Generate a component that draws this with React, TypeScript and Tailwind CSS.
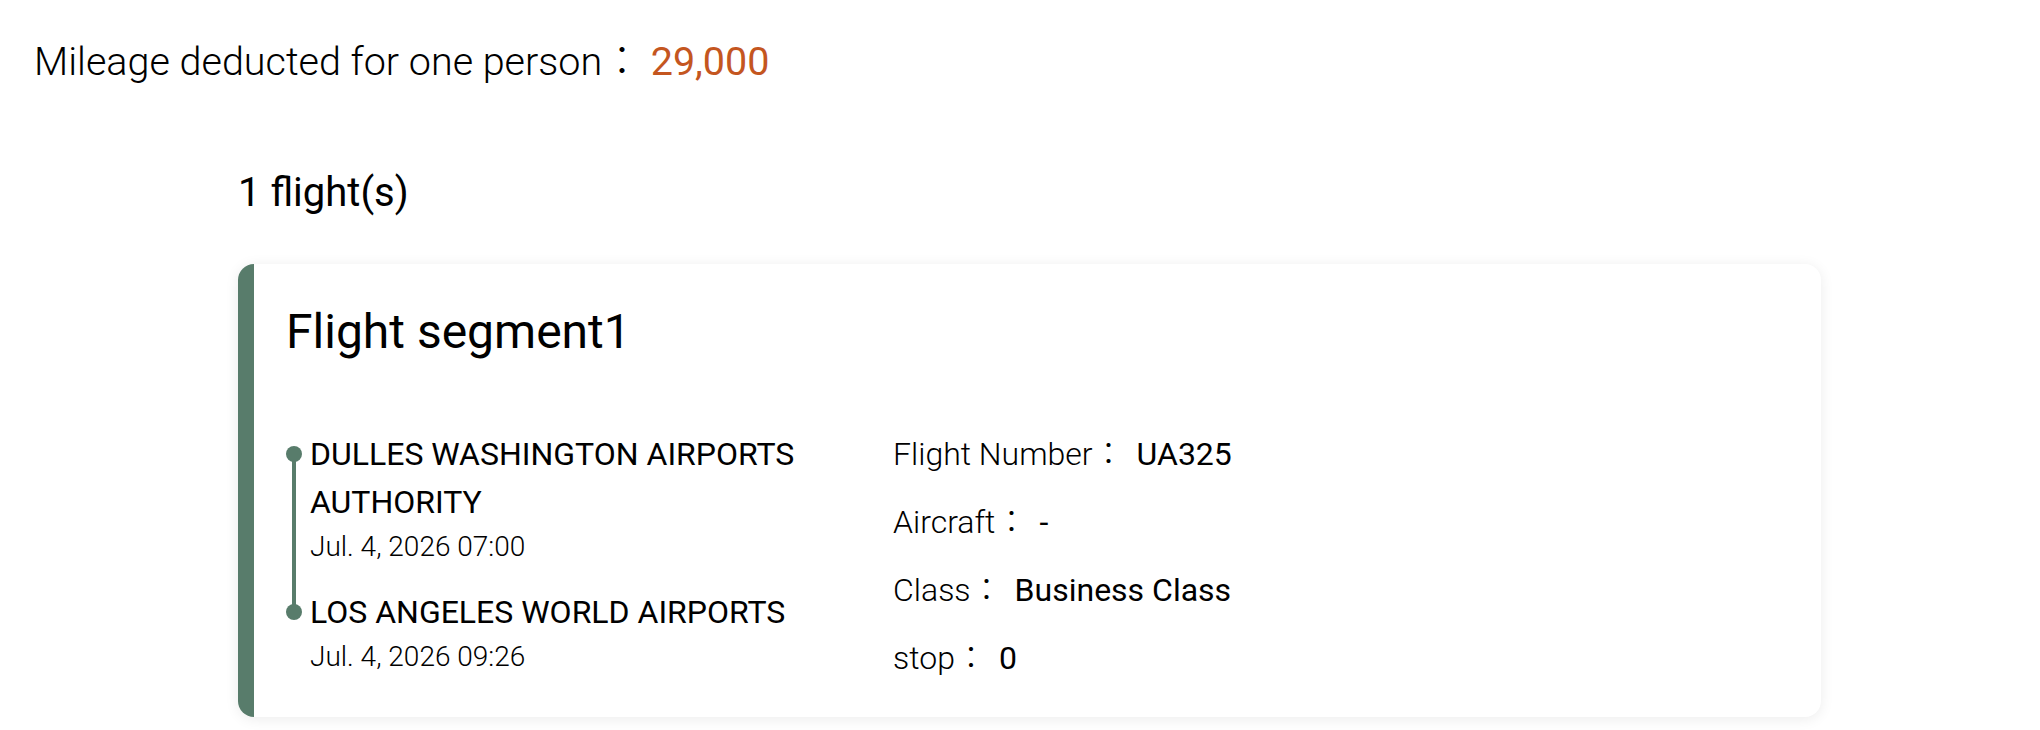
const font = { fontFamily: 'Roboto, "Noto Sans CJK JP", sans-serif' };

const details = [
  { label: "Flight Number", value: "UA325" },
  { label: "Aircraft", value: "-" },
  { label: "Class", value: "Business Class" },
  { label: "stop", value: "0" },
];

function Dot() {
  return <span className="block h-4 w-4 shrink-0 rounded-full bg-[#587c6b]" />;
}

export default function App() {
  return (
    <div className="min-h-screen w-full bg-white pt-[32px] text-black" style={font}>
      <p className="pl-[34px] text-[39.5px] font-light leading-[60px]">
        Mileage deducted for one person：
        <span className="ml-[9px] font-normal text-[#c4561f]">29,000</span>
      </p>

      <div className="ml-[238px] mt-[71px] w-[1583px]">
        <h2 className="text-[40px] font-normal leading-[60px]">1 flight(s)</h2>

        <div className="mt-[41px] flex overflow-hidden rounded-2xl bg-white shadow-[0_2px_14px_rgba(0,0,0,0.08)]">
          <div className="w-4 shrink-0 bg-[#587c6b]" />
          <div className="flex-1 pb-[35px] pl-[32px] pr-8 pt-[32px]">
            <h3 className="text-[48px] font-normal leading-[72px]">Flight segment1</h3>

            <div className="mt-[62px] flex">
              {/* route timeline */}
              <div className="flex w-[607px] shrink-0 flex-col">
                <div className="flex gap-2">
                  <div className="flex w-4 shrink-0 flex-col items-center">
                    <span className="h-4 w-1 shrink-0" />
                    <Dot />
                    <span className="-mt-2 w-1 flex-1 bg-[#587c6b]" />
                  </div>
                  <div className="w-[540px] pb-[20px]">
                    <div className="text-[32px] leading-[48px]">DULLES WASHINGTON AIRPORTS AUTHORITY</div>
                    <div className="text-[28px] font-light leading-[42px]">Jul. 4, 2026 07:00</div>
                  </div>
                </div>
                <div className="flex gap-2">
                  <div className="flex w-4 shrink-0 flex-col items-center">
                    <span className="-mb-2 h-6 w-1 bg-[#587c6b]" />
                    <Dot />
                  </div>
                  <div>
                    <div className="text-[32px] leading-[48px]">LOS ANGELES WORLD AIRPORTS</div>
                    <div className="text-[28px] font-light leading-[42px]">Jul. 4, 2026 09:26</div>
                  </div>
                </div>
              </div>

              {/* flight details */}
              <div className="flex flex-col gap-[20px]">
                {details.map((d) => (
                  <div key={d.label} className="text-[32px] leading-[48px]">
                    <span className="font-light">{d.label}：</span>
                    <span className="ml-3 font-normal">{d.value}</span>
                  </div>
                ))}
              </div>
            </div>
          </div>
        </div>
      </div>
    </div>
  );
}
